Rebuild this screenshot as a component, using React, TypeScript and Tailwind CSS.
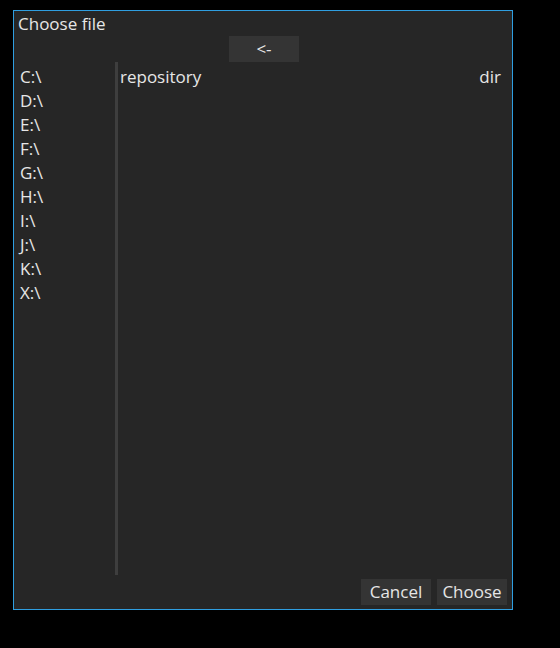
import React from "react";

const drives = ["C:\\", "D:\\", "E:\\", "F:\\", "G:\\", "H:\\", "I:\\", "J:\\", "K:\\", "X:\\"];

export default function App() {
  return (
    <div
      className="w-[560px] h-[648px] bg-black pl-[13px] pt-[10px] text-[#e6e6e6] text-[17px]"
      style={{ fontFamily: '"Open Sans", "Noto Sans", sans-serif' }}
    >
      <div className="w-[500px] h-[600px] border border-[#2f9ee0] bg-[#262626] flex flex-col">
        <div className="h-[24px] pl-[4px] pt-[1px] leading-[24px]">Choose file</div>
        <div className="flex justify-center pl-[2px]">
          <button className="w-[70px] h-[26px] mt-[1px] bg-[#343434] leading-[26px] text-center">&lt;-</button>
        </div>
        <div className="flex flex-1 min-h-0">
          <div className="w-[101px] pt-[3px] pl-[6px]">
            {drives.map((d) => (
              <div key={d} className="h-[24px] leading-[24px]">
                {d}
              </div>
            ))}
          </div>
          <div className="w-[3px] bg-[#3e3e3e]" />
          <div className="flex-1 pt-[3px] pl-[2px] pr-[11px]">
            <div className="flex justify-between h-[24px] leading-[24px]">
              <span>repository</span>
              <span>dir</span>
            </div>
          </div>
        </div>
        <div className="flex justify-end gap-[6px] pt-[4px] pb-[4px] pr-[5px]">
          <button className="w-[70px] h-[26px] bg-[#343434] leading-[26px] text-center">Cancel</button>
          <button className="w-[70px] h-[26px] bg-[#343434] leading-[26px] text-center">Choose</button>
        </div>
      </div>
    </div>
  );
}
